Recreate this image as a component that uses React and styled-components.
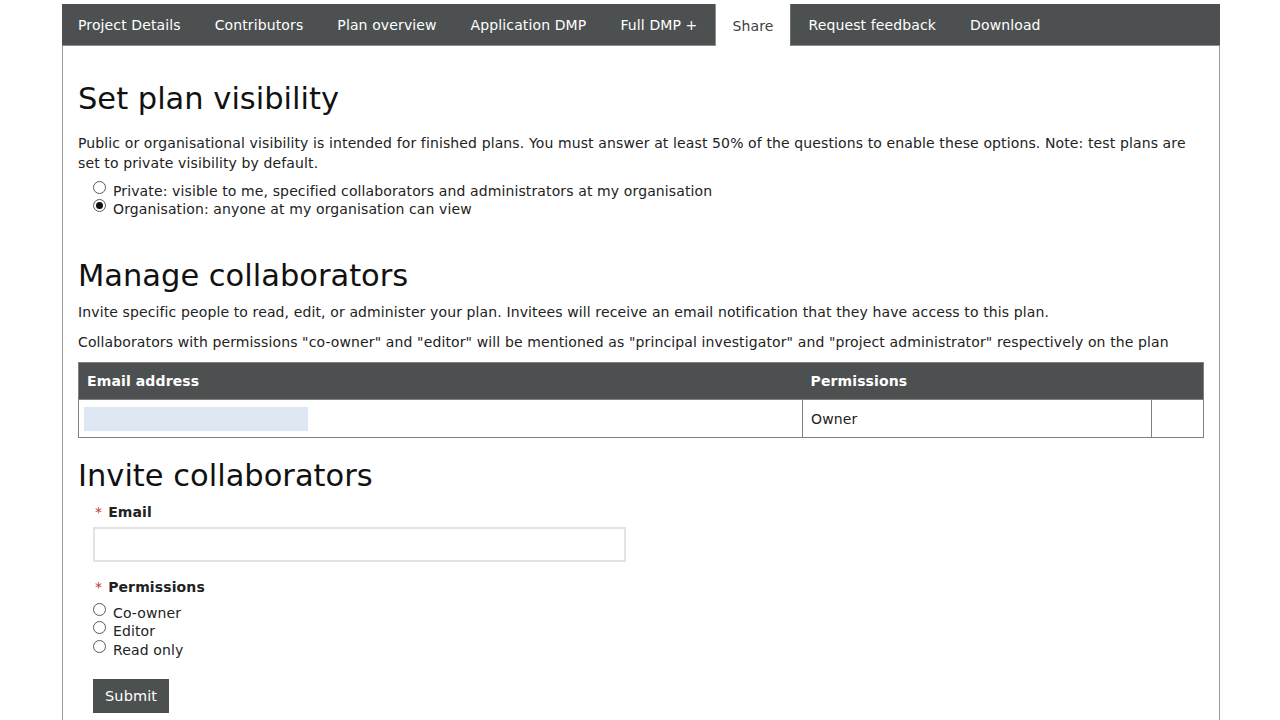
import React from 'react'
import styled, { createGlobalStyle } from 'styled-components'

const GlobalStyle = createGlobalStyle`
  html, body {
    margin: 0;
    padding: 0;
    background: #ffffff;
  }
  body {
    font-family: "DejaVu Sans", Verdana, sans-serif;
    font-size: 14px;
    letter-spacing: 0.12px;
    color: #222;
  }
  * { box-sizing: border-box; }
`

const tabs = [
  'Project Details',
  'Contributors',
  'Plan overview',
  'Application DMP',
  'Full DMP +',
  'Share',
  'Request feedback',
  'Download',
]

const App = () => {
  return (
    <>
      <GlobalStyle />
      <Page>
        <TabBar>
          {tabs.map((t) => (
            <Tab key={t} $active={t === 'Share'}>{t}</Tab>
          ))}
        </TabBar>
        <Panel>
          <Heading $bottom={15}>Set plan visibility</Heading>
          <Text>
            Public or organisational visibility is intended for finished plans. You must answer at least 50% of the questions to enable these options. Note: test plans are set to private visibility by default.
          </Text>
          <RadioList $indent={15} $top={9}>
            <RadioRow>
              <Radio type="radio" name="vis" />
              <span>Private: visible to me, specified collaborators and administrators at my organisation</span>
            </RadioRow>
            <RadioRow>
              <Radio type="radio" name="vis" defaultChecked />
              <span>Organisation: anyone at my organisation can view</span>
            </RadioRow>
          </RadioList>

          <Heading $top={39} $bottom={8}>Manage collaborators</Heading>
          <Text $compact>
            Invite specific people to read, edit, or administer your plan. Invitees will receive an email notification that they have access to this plan.
          </Text>
          <Text $compact>
            Collaborators with permissions "co-owner" and "editor" will be mentioned as "principal investigator" and "project administrator" respectively on the plan
          </Text>

          <Table>
            <thead>
              <tr>
                <Th style={{ width: 724 }}>Email address</Th>
                <Th style={{ width: 349 }}>Permissions</Th>
                <Th />
              </tr>
            </thead>
            <tbody>
              <tr>
                <Td><Redacted /></Td>
                <Td>Owner</Td>
                <Td />
              </tr>
            </tbody>
          </Table>

          <Heading $top={20} $bottom={13}>Invite collaborators</Heading>
          <Form>
            <Label><Star>*</Star>Email</Label>
            <Input type="text" />
            <Label $top={17}><Star>*</Star>Permissions</Label>
            <RadioList $top={9}>
              <RadioRow>
                <Radio type="radio" name="perm" />
                <span>Co-owner</span>
              </RadioRow>
              <RadioRow>
                <Radio type="radio" name="perm" />
                <span>Editor</span>
              </RadioRow>
              <RadioRow>
                <Radio type="radio" name="perm" />
                <span>Read only</span>
              </RadioRow>
            </RadioList>
            <Button type="button">Submit</Button>
          </Form>
        </Panel>
      </Page>
    </>
  )
}

export default App

const Page = styled.div`
  width: 1158px;
  margin: 4px 0 0 62px;
`

const TabBar = styled.nav`
  display: flex;
  height: 42px;
  background: #4d5051;
  border-bottom: 1px solid #8d8f90;
  align-items: stretch;
`

const Tab = styled.div`
  display: flex;
  align-items: center;
  padding: 1px 17px 0 16px;
  margin-right: 1px;
  color: ${(p) => (p.$active ? '#3d4041' : '#ffffff')};
  background: ${(p) => (p.$active ? '#ffffff' : 'transparent')};
  margin-bottom: ${(p) => (p.$active ? '-1px' : '0')};
  border-left: ${(p) => (p.$active ? '1px solid #8d8f90' : 'none')};
  border-right: ${(p) => (p.$active ? '1px solid #6d6f70' : 'none')};
  font-size: 14px;
  white-space: nowrap;
`

const Panel = styled.div`
  border-left: 1px solid #9a9a9a;
  border-right: 1px solid #9a9a9a;
  padding: 35px 15px 20px 15px;
  min-height: 700px;
`

const Heading = styled.h2`
  font-size: 30.5px;
  font-weight: 400;
  letter-spacing: 0;
  color: #111;
  margin: ${(p) => p.$top || 0}px 0 ${(p) => p.$bottom || 12}px;
  line-height: 1.2;
`

const Text = styled.p`
  margin: 0 0 ${(p) => (p.$compact ? 10 : 0)}px;
  line-height: 20px;
  color: #222;
`

const RadioList = styled.div`
  display: flex;
  flex-direction: column;
  padding-left: ${(p) => p.$indent || 0}px;
  margin-top: ${(p) => p.$top || 0}px;
`

const RadioRow = styled.label`
  display: flex;
  align-items: flex-start;
  gap: 7px;
  line-height: 18.5px;
  color: #222;
`

const Radio = styled.input`
  appearance: none;
  -webkit-appearance: none;
  margin: 0;
  width: 13px;
  height: 13px;
  flex: none;
  border: 1px solid #5a5a5a;
  border-radius: 50%;
  background: #fff;
  position: relative;
  top: -1px;
  &:checked::after {
    content: '';
    position: absolute;
    left: 2px;
    top: 2px;
    width: 7px;
    height: 7px;
    border-radius: 50%;
    background: #111;
  }
`

const Table = styled.table`
  width: 1126px;
  border-collapse: collapse;
  margin-top: 10px;
  border: 1px solid #808080;
`

const Th = styled.th`
  background: #4d5051;
  color: #fff;
  font-weight: 700;
  text-align: left;
  height: 37px;
  padding: 0 8px;
`

const Td = styled.td`
  border: 1px solid #808080;
  height: 38px;
  padding: 0 8px;
  &:first-child { padding: 0 5px; }
`

const Redacted = styled.div`
  width: 224px;
  height: 24px;
  background: #dde8f4;
`

const Form = styled.div`
  padding-left: 15px;
  margin-top: -4px;
`

const Label = styled.div`
  font-weight: 700;
  color: #222;
  margin: ${(p) => p.$top || 0}px 0 7px;
`

const Star = styled.span`
  color: #c0392b;
  font-weight: 400;
  margin: 0 6px 0 2px;
`

const Input = styled.input`
  display: block;
  width: 533px;
  height: 35px;
  border: 2px solid #e3e3e3;
  outline: none;
`

const Button = styled.button`
  display: block;
  margin-top: 20px;
  background: #4d5051;
  color: #fff;
  border: none;
  height: 34px;
  padding: 0 12px;
  font-family: inherit;
  font-size: 14.5px;
  letter-spacing: 0.12px;
`
